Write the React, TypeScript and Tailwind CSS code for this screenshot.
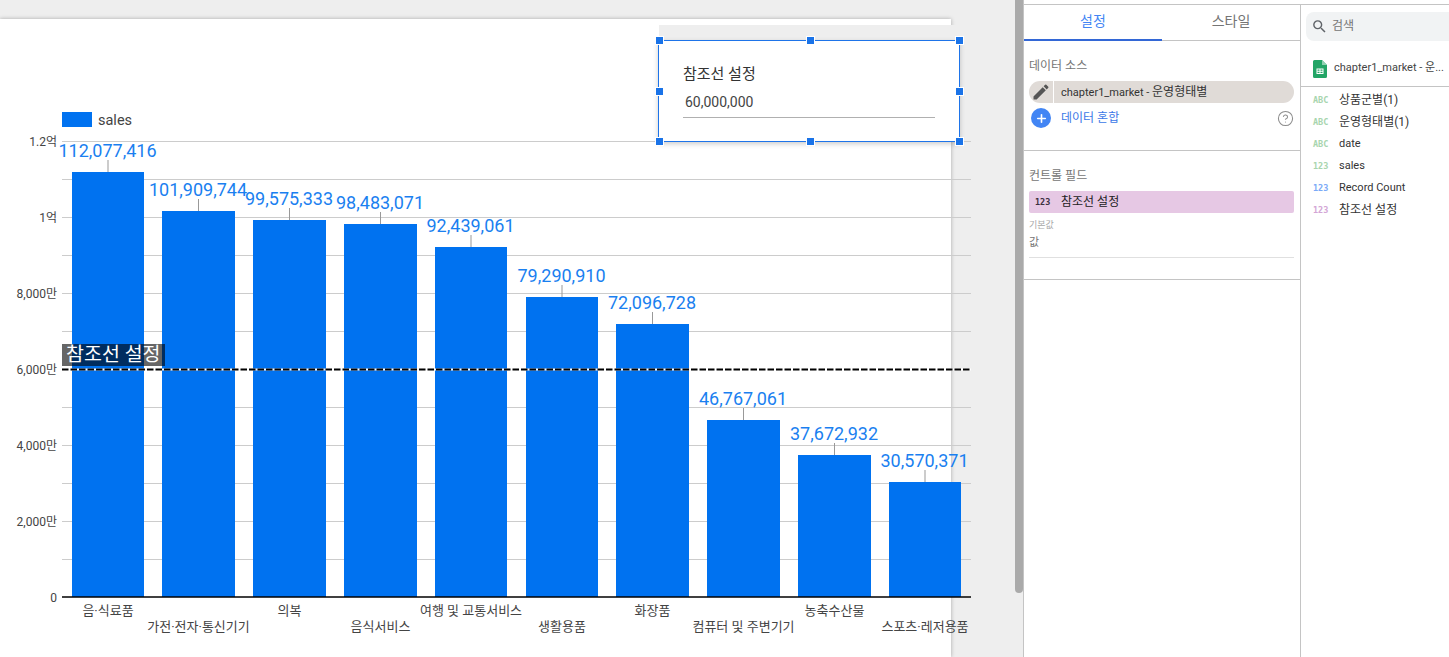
import React from "react";
import { Plus, CircleHelp } from "lucide-react";

const FONT = "Roboto, 'Noto Sans CJK KR', sans-serif";

const bars = [
  { x: 72, w: 72, top: 172, value: "112,077,416", name: "음·식료품", row: 0, labelY: 157 },
  { x: 162, w: 73, top: 211, value: "101,909,744", name: "가전·전자·통신기기", row: 1, labelY: 196 },
  { x: 253, w: 73, top: 220, value: "99,575,333", name: "의복", row: 0, labelY: 205 },
  { x: 344, w: 73, top: 224, value: "98,483,071", name: "음식서비스", row: 1, labelY: 209 },
  { x: 435, w: 72, top: 247, value: "92,439,061", name: "여행 및 교통서비스", row: 0, labelY: 232 },
  { x: 526, w: 72, top: 297, value: "79,290,910", name: "생활용품", row: 1, labelY: 282 },
  { x: 616, w: 73, top: 324, value: "72,096,728", name: "화장품", row: 0, labelY: 309 },
  { x: 707, w: 73, top: 420, value: "46,767,061", name: "컴퓨터 및 주변기기", row: 1, labelY: 405 },
  { x: 798, w: 73, top: 455, value: "37,672,932", name: "농축수산물", row: 0, labelY: 440 },
  { x: 889, w: 72, top: 482, value: "30,570,371", name: "스포츠·레저용품", row: 1, labelY: 467 },
];

const grid = [141, 179, 217, 255, 293, 331, 369, 407, 445, 483, 521, 559];

const yTicks = [
  { y: 141, label: "1.2억" },
  { y: 217, label: "1억" },
  { y: 293, label: "8,000만" },
  { y: 369, label: "6,000만" },
  { y: 445, label: "4,000만" },
  { y: 521, label: "2,000만" },
  { y: 597, label: "0" },
];

const fields = [
  { type: "ABC", color: "text-[#a8d5ae]", name: "상품군별(1)", ko: true },
  { type: "ABC", color: "text-[#a8d5ae]", name: "운영형태별(1)", ko: true },
  { type: "ABC", color: "text-[#a8d5ae]", name: "date", ko: false },
  { type: "123", color: "text-[#a8d5ae]", name: "sales", ko: false },
  { type: "123", color: "text-[#7baaf7]", name: "Record Count", ko: false },
  { type: "123", color: "text-[#d3a6d6]", name: "참조선 설정", ko: true },
];

const Chart = () => (
  <svg width={1015} height={657} className="absolute left-0 top-0" style={{ fontFamily: FONT }}>
    {grid.map((y) => (
      <line key={y} x1={62} x2={971} y1={y + 0.5} y2={y + 0.5} stroke="#cccccc" />
    ))}
    {bars.map((b) => (
      <g key={b.name}>
        <rect x={b.x} y={b.top} width={b.w} height={597 - b.top} fill="#0072f0" />
        <line x1={b.x + b.w / 2} x2={b.x + b.w / 2} y1={b.top - 12} y2={b.top} stroke="#999999" />
        <text x={b.x + b.w / 2 - 0.5} y={b.labelY} textAnchor="middle" fontSize={18} fill="#1a7ff0">
          {b.value}
        </text>
        <text
          x={b.x + b.w / 2}
          y={b.row === 0 ? 615 : 631}
          textAnchor="middle"
          fontSize={13}
          fill="#444444"
        >
          {b.name}
        </text>
      </g>
    ))}
    <line x1={62} x2={971} y1={597} y2={597} stroke="#000000" strokeWidth={1.5} />
    {yTicks.map((t) => (
      <text key={t.y} x={57} y={t.y + 5} textAnchor="end" fontSize={12} fill="#444444">
        {t.label}
      </text>
    ))}
    <rect x={62} y={112} width={30} height={15} fill="#0072f0" />
    <text x={98} y={125} fontSize={14.5} fill="#444444">
      sales
    </text>
    <line x1={62} x2={971} y1={369.5} y2={369.5} stroke="#ffffff" strokeWidth={2} />
    <line x1={62} x2={971} y1={369.5} y2={369.5} stroke="#000000" strokeWidth={2} strokeDasharray="6.500 2" />
    <rect x={62} y={344} width={103} height={22} fill="#000000" fillOpacity={0.6} />
    <text x={66} y={361} fontSize={19.5} fill="#ffffff">
      참조선 설정
    </text>
  </svg>
);

const Handle = ({ className }: { className: string }) => (
  <div className={`absolute w-[7px] h-[7px] bg-[#1a73e8] outline outline-1 outline-white ${className}`} />
);

const ControlBox = () => (
  <>
    <div className="absolute left-[659px] top-[25px] w-[300px] h-[16px] bg-[#eeeeee]" />
    <div className="absolute left-[658px] top-[40px] w-[302px] h-[102px] bg-white border border-[#1e74e9] shadow-[0_2px_5px_rgba(0,0,0,0.2)] px-[24px] pt-[23px]">
      <div className="text-[15px] leading-[20px] text-[#333333]">참조선 설정</div>
      <div className="mt-[8px] w-[252px] pl-[2px] pb-[5px] border-b border-[#b0b0b0] text-[14px] leading-[20px] text-[#444444]">
        60,000,000
      </div>
      <Handle className="left-[-3px] top-[-4px]" />
      <Handle className="left-[148px] top-[-4px]" />
      <Handle className="right-[-4px] top-[-4px]" />
      <Handle className="left-[-3px] top-[47px]" />
      <Handle className="right-[-4px] top-[47px]" />
      <Handle className="left-[-3px] bottom-[-4px]" />
      <Handle className="left-[148px] bottom-[-4px]" />
      <Handle className="right-[-4px] bottom-[-4px]" />
    </div>
  </>
);

const SheetIcon = () => (
  <svg width={14} height={18} viewBox="0 0 14 18">
    <path d="M1.500 0H9l5 5v11.500a1.500 1.500 0 0 1-1.500 1.500h-11A1.500 1.500 0 0 1 0 16.500V1.500A1.500 1.500 0 0 1 1.500 0z" fill="#23a566" />
    <path d="M9 0l5 5H9z" fill="#8ed1b1" />
    <path d="M3.500 8.500h7v5.500h-7zM4.500 9.500v1.200h2v-1.200zM7.500 9.500v1.200h2v-1.200zM4.500 11.700v1.300h2v-1.300zM7.500 11.700v1.300h2v-1.300z" fill="#ffffff" fillRule="evenodd" />
  </svg>
);

const EditIcon = () => (
  <svg width={20} height={20} viewBox="0 0 24 24" fill="#555555">
    <path d="M3 17.250V21h3.750L17.810 9.940l-3.750-3.750L3 17.250zM20.710 7.040a1 1 0 0 0 0-1.410l-2.340-2.340a1 1 0 0 0-1.410 0l-1.830 1.830 3.750 3.750 1.830-1.830z" />
  </svg>
);

const SearchIcon = () => (
  <svg width={17} height={17} viewBox="0 0 24 24" fill="#5f6368">
    <path d="M15.500 14h-.790l-.280-.270A6.471 6.471 0 0 0 16 9.500 6.500 6.500 0 1 0 9.500 16c1.610 0 3.090-.590 4.230-1.570l.270.280v.790l5 4.990L20.490 19l-4.990-5zm-6 0C7.010 14 5 11.990 5 9.500S7.010 5 9.500 5 14 7.010 14 9.500 11.990 14 9.500 14z" />
  </svg>
);

const SettingsPanel = () => (
  <div className="w-[277px] shrink-0 h-full border-r border-[#c4c4c4] bg-white">
    <div className="flex h-[36px] border-b border-[#c4c4c4]">
      <div className="w-[138px] h-[36px] pb-[2px] border-b-2 border-[#3367d6] flex items-center justify-center text-[14px] text-[#4285f4]">
        설정
      </div>
      <div className="flex-1 pb-[2px] flex items-center justify-center text-[14px] text-[#757575]">스타일</div>
    </div>

    <div className="h-[110px] border-b border-[#c4c4c4] px-[5px] pt-[17px]">
      <div className="text-[12px] leading-[16px] text-[#757575]">데이터 소스</div>
      <div className="mt-[7px] w-[265px] h-[22px] rounded-full bg-[#e0dbd7] flex items-center overflow-hidden">
        <div className="w-[25px] h-full flex items-center justify-center border-r border-white">
          <EditIcon />
        </div>
        <span className="ml-[7px] text-[11px] text-[#333333]">
          chapter1_market - <span className="text-[12px]">운영형태별</span>
        </span>
      </div>
      <div className="mt-[5px] w-[265px] flex items-center">
        <div className="ml-[2px] w-[20px] h-[20px] rounded-full bg-[#4285f4] flex items-center justify-center">
          <Plus size={13} stroke="#ffffff" strokeWidth={3} />
        </div>
        <span className="ml-[10px] text-[12px] text-[#3b78e7]">데이터 혼합</span>
        <CircleHelp size={17} stroke="#8c8c8c" strokeWidth={1.5} className="ml-auto" />
      </div>
    </div>

    <div className="h-[129px] border-b border-[#c4c4c4] px-[5px] pt-[17px]">
      <div className="text-[12px] leading-[16px] text-[#757575]">컨트롤 필드</div>
      <div className="mt-[7px] w-[265px] h-[22px] rounded-[2px] bg-[#e6c8e4] flex items-center">
        <span className="ml-[6px] w-[26px] text-[8.500px] font-bold font-['DejaVu_Sans_Mono',monospace] text-[#3c3040]">123</span>
        <span className="text-[12px] text-[#222222]">참조선 설정</span>
      </div>
      <div className="mt-[7px] text-[9px] leading-[10px] text-[#a8a8a8]">기본값</div>
      <div className="w-[265px] h-[28px] pt-[5px] border-b border-[#e0e0e0] text-[11px] leading-[16px] text-[#757575]">값</div>
    </div>
  </div>
);

const DataPanel = () => (
  <div className="flex-1 h-full bg-white overflow-hidden">
    <div className="pl-[5px] pt-[7px]">
      <div className="h-[29px] rounded-l-[8px] bg-[#f1f3f4] flex items-center pl-[5px] pb-[1px]">
        <SearchIcon />
        <span className="ml-[4px] text-[12px] text-[#757575]">검색</span>
      </div>
    </div>
    <div className="h-[46px] pt-[10px] border-b border-[#c4c4c4] flex items-center pl-[12px]">
      <SheetIcon />
      <span className="ml-[7px] text-[11px] text-[#444444] whitespace-nowrap">chapter1_market - 운...</span>
    </div>
    <div className="pl-[12px] pt-[2px]">
      {fields.map((f) => (
        <div key={f.name} className="h-[22px] flex items-center">
          <span className={`w-[26px] text-[8.500px] font-bold font-['DejaVu_Sans_Mono',monospace] ${f.color}`}>{f.type}</span>
          <span className={f.ko ? "text-[12px] text-[#333333]" : "text-[11px] text-[#333333]"}>{f.name}</span>
        </div>
      ))}
    </div>
  </div>
);

export default function App() {
  return (
    <div className="flex h-[657px] w-[1449px] overflow-hidden bg-white" style={{ fontFamily: FONT }}>
      <div className="relative w-[1015px] shrink-0 h-full bg-[#eeeeee] pt-[19px]">
        <div className="w-[951px] h-full bg-white shadow-[0_0_4px_rgba(0,0,0,0.3)]" />
        <Chart />
        <ControlBox />
      </div>
      <div className="w-[8px] shrink-0 h-full bg-[#eeeeee]">
        <div className="h-[593px] rounded-b-[4px] bg-[#aaaaaa]" />
      </div>
      <div className="flex flex-1 h-full border-l border-[#c4c4c4] bg-white pt-[4px]">
        <div className="flex flex-1 border-t border-[#c4c4c4]">
          <SettingsPanel />
          <DataPanel />
        </div>
      </div>
    </div>
  );
}
